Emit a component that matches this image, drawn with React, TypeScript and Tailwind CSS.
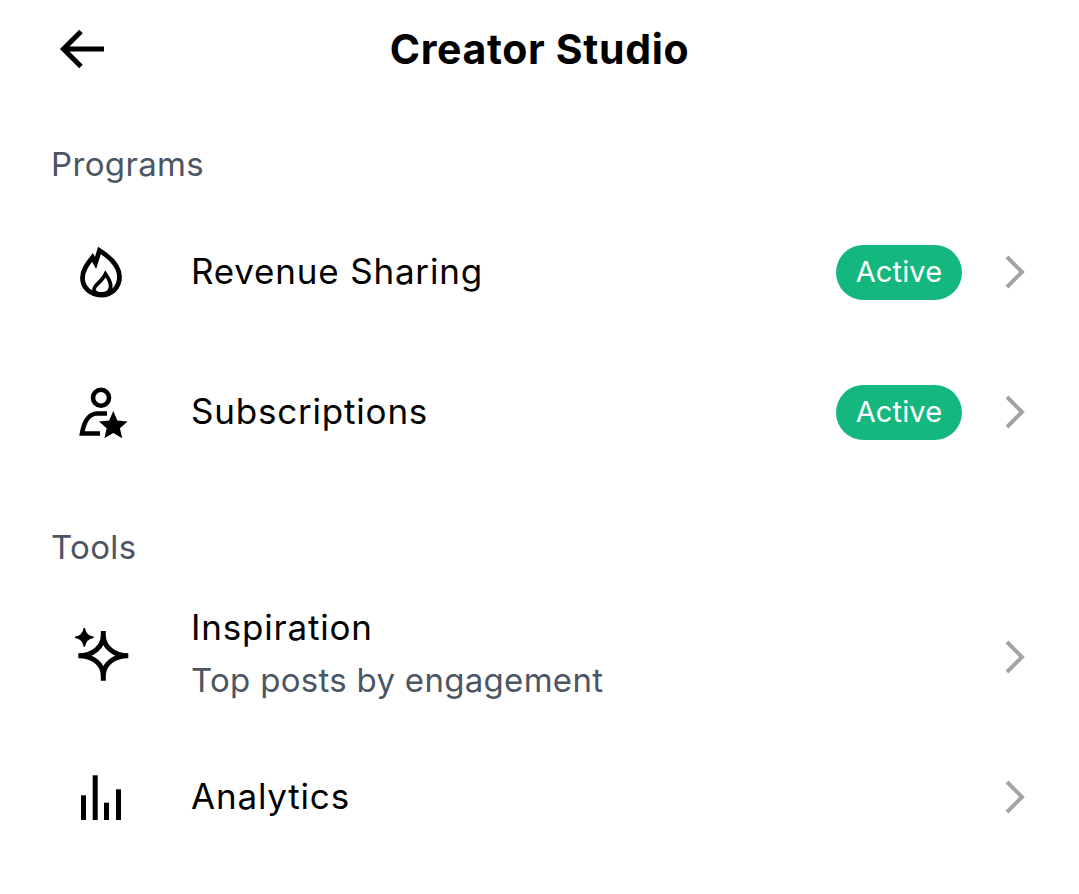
import React from "react";

const Chevron = ({ className = "" }: { className?: string }) => (
  <svg width="22" height="36" viewBox="0 0 22 36" fill="none" className={`shrink-0 ${className}`}>
    <path d="M3 3 L18 18 L3 33" stroke="#a3a3a3" strokeWidth="4" />
  </svg>
);

const Flame = () => (
  <svg width="56" height="56" viewBox="0 0 56 56" fill="none" stroke="black" strokeWidth="4.8">
    <path d="M26.5 6.5 C36 12.5 46.5 21 46.5 33 C46.5 44 38 51 28 51 C18 51 9.5 44 9.5 34 C9.5 26 14.5 20 19.5 13.5 L22.5 19 Z" />
    <path d="M32.5 30 C36 35 38.5 40 37.5 44 C36.5 48 33 50 29 50 C25 50 21.5 49 21 46 C20.5 41 29 38 32.5 30 Z" strokeWidth="3.8" />
  </svg>
);

const PersonStar = () => (
  <svg width="56" height="56" viewBox="0 0 56 56" fill="none" stroke="black" strokeWidth="4.6">
    <circle cx="28" cy="13.7" r="8" />
    <path d="M34 29.5 H24 C16 29.5 11 38 9 49.5 H27" />
    <path
      d="M40.3 27 L44.4 36.4 L54.6 37.4 L46.9 44.2 L49.2 54.2 L40.3 49 L31.4 54.2 L33.7 44.2 L26 37.4 L36.2 36.4 Z"
      fill="black"
      stroke="none"
    />
  </svg>
);

const Sparkle = () => (
  <svg width="56" height="56" viewBox="0 0 56 56" fill="none" stroke="black" strokeWidth="5">
    <path d="M30.3 4 V8 C30.3 20 41 28.7 55.3 28.7 M30.3 53.7 V49 C30.3 37 41 28.7 55.3 28.7 M30.3 4 V8 C30.3 20 20 28.7 5.3 28.7 M30.3 53.7 V49 C30.3 37 20 28.7 5.3 28.7" />
    <path d="M11.3 1 C12 6.2 14.8 9.4 20.5 10.3 C14.8 11.2 12 14.4 11.3 19.6 C10.6 14.4 7.8 11.2 2.2 10.3 C7.8 9.4 10.6 6.2 11.3 1 Z" fill="black" stroke="black" strokeWidth="1.4" />
  </svg>
);

const Bars = () => (
  <svg width="56" height="56" viewBox="0 0 56 56" fill="black">
    <rect x="8" y="26.3" width="5" height="24.7" />
    <rect x="19.7" y="6.3" width="5" height="44.7" />
    <rect x="31" y="33.7" width="5" height="17.3" />
    <rect x="43" y="20.3" width="5" height="30.7" />
  </svg>
);

const Badge = () => (
  <span className="flex h-[55px] w-[126px] items-center justify-center rounded-full bg-[#14b87f] text-[29px] tracking-[0.15px] text-white">
    Active
  </span>
);

function Row({
  icon,
  title,
  sub,
  badge,
  height,
  chevronClass,
}: {
  icon: React.ReactNode;
  title: string;
  sub?: string;
  badge?: boolean;
  height: string;
  chevronClass?: string;
}) {
  return (
    <div className={`flex items-center pl-[73px] pr-[53px] ${height}`}>
      <div className="mr-[62px] shrink-0">{icon}</div>
      <div className="min-w-0 flex-1 pb-[2px]">
        <div className="text-[35px] leading-[52px] tracking-[0.8px] text-black">{title}</div>
        {sub && <div className="text-[33px] leading-[54px] tracking-[0.3px] text-[#4b5563]">{sub}</div>}
      </div>
      {badge && (
        <div className="mr-[42px]">
          <Badge />
        </div>
      )}
      <Chevron className={chevronClass} />
    </div>
  );
}

export default function App() {
  return (
    <div className="min-h-[894px] bg-white font-['Inter',sans-serif]">
      <header className="grid h-[98px] grid-cols-[1fr_auto_1fr] items-center pl-[58px]">
        <svg width="48" height="42" viewBox="0 0 48 42" fill="none" stroke="black" strokeWidth="5">
          <path d="M46 21 H6 M23 3.5 L5.5 21 L23 38.5" />
        </svg>
        <h1 className="-translate-x-[29px] text-[41px] leading-[50px] font-bold tracking-[0.65px] text-black">
          Creator Studio
        </h1>
        <div />
      </header>
      <div className="mt-[46px] pl-[51px] text-[33px] leading-[40px] tracking-[0.35px] text-[#4b5563]">Programs</div>
      <div className="mt-[18px]">
        <Row icon={<Flame />} title="Revenue Sharing" badge height="h-[140px]" />
        <Row icon={<PersonStar />} title="Subscriptions" badge height="h-[140px]" />
      </div>
      <div className="mt-[45px] pl-[51px] text-[33px] leading-[40px] tracking-[0.35px] text-[#4b5563]">Tools</div>
      <div className="mt-[16px]">
        <Row
          icon={<Sparkle />}
          title="Inspiration"
          sub="Top posts by engagement"
          height="h-[144px]"
          chevronClass="mt-[4px]"
        />
        <Row icon={<Bars />} title="Analytics" height="h-[140px]" />
      </div>
    </div>
  );
}
